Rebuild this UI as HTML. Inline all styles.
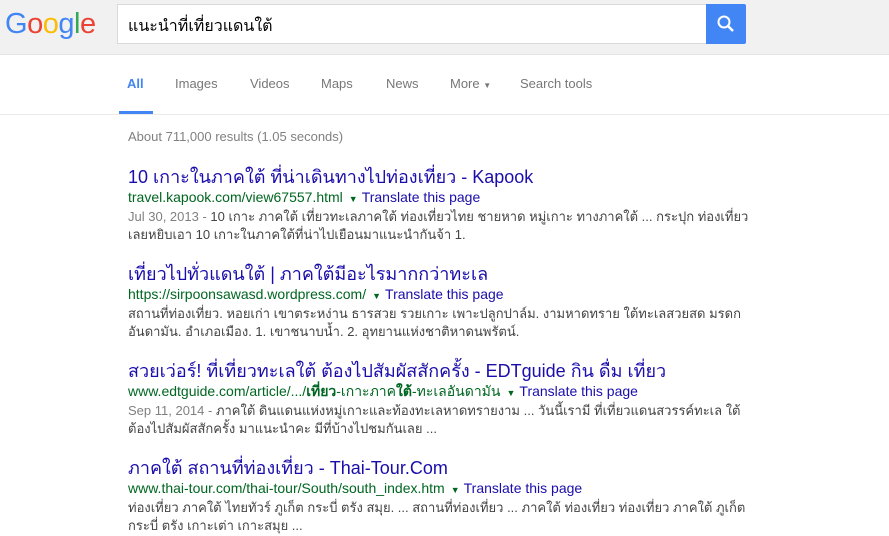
<!DOCTYPE html>
<html><head><meta charset="utf-8"><style>
*{margin:0;padding:0;box-sizing:border-box}
body{width:889px;height:536px;overflow:hidden;background:#fff;font-family:"Liberation Sans",Arial,sans-serif;position:relative}
.hdr{position:absolute;left:0;top:0;width:889px;height:55px;background:#f1f1f1;border-bottom:1px solid #e5e5e5}
.logo{position:absolute;left:5px;top:8px;font-size:29px;letter-spacing:-0.5px;font-family:"Liberation Sans",sans-serif}
.box{position:absolute;left:117px;top:4px;width:590px;height:40px;background:#fff;border:1px solid #d9d9d9;border-right:none;font-size:16px;padding:9px 10px;color:#000}
.btn{position:absolute;left:706px;top:4px;width:40px;height:40px;background:#4285f4;border-radius:0 2px 2px 0}
.tabs{position:absolute;left:0;top:55px;width:889px;height:60px;border-bottom:1px solid #ebebeb}
.tab{position:absolute;top:21px;font-size:13px;color:#777}
.ul{position:absolute;left:119px;top:56px;width:34px;height:3px;background:#4285f4}
.stats{position:absolute;left:128px;top:129px;font-size:13px;color:#808080}
.r{position:absolute;left:128px;width:760px}
.t{font-size:18px;color:#1a0dab;line-height:22px;white-space:nowrap}
.u{font-size:14px;color:#006621;line-height:18px;white-space:nowrap}
.u .a{color:#006621;font-size:9px;margin:0 4px 0 6px}
.u .tr{color:#1a0dab}
.s{font-size:13px;color:#444;line-height:18px;white-space:nowrap}
.s .d{color:#808080}
</style></head><body>
<div class="hdr">
<div class="logo"><span style="color:#4285f4">G</span><span style="color:#ea4335">o</span><span style="color:#fbbc05">o</span><span style="color:#4285f4">g</span><span style="color:#34a853">l</span><span style="color:#ea4335">e</span></div>
<div class="box">แนะนำที่เที่ยวแดนใต้</div>
<div class="btn"><svg width="40" height="40" viewBox="0 0 40 40"><circle cx="18" cy="18" r="5.5" fill="none" stroke="#fff" stroke-width="2"/><line x1="22" y1="22" x2="27" y2="27" stroke="#fff" stroke-width="2.5"/></svg></div>
</div>
<div class="tabs">
<div class="tab" style="left:127px;color:#4285f4;font-weight:bold">All</div>
<div class="tab" style="left:175px">Images</div>
<div class="tab" style="left:250px">Videos</div>
<div class="tab" style="left:321px">Maps</div>
<div class="tab" style="left:386px">News</div>
<div class="tab" style="left:450px">More <span style="font-size:8px">▼</span></div>
<div class="tab" style="left:520px">Search tools</div>
<div class="ul"></div>
</div>
<div class="stats">About 711,000 results (1.05 seconds)</div>

<div class="r" style="top:166px">
<div class="t">10 เกาะในภาคใต้ ที่น่าเดินทางไปท่องเที่ยว - Kapook</div>
<div class="u">travel.kapook.com/view67557.html<span class="a">▼</span><span class="tr">Translate this page</span></div>
<div class="s"><span class="d">Jul 30, 2013 - </span>10 เกาะ ภาคใต้ เที่ยวทะเลภาคใต้ ท่องเที่ยวไทย ชายหาด หมู่เกาะ ทางภาคใต้ ... กระปุก ท่องเที่ยว<br>เลยหยิบเอา 10 เกาะในภาคใต้ที่น่าไปเยือนมาแนะนำกันจ้า 1.</div>
</div>
<div class="r" style="top:263px">
<div class="t">เที่ยวไปทั่วแดนใต้ | ภาคใต้มีอะไรมากกว่าทะเล</div>
<div class="u">https://sirpoonsawasd.wordpress.com/<span class="a">▼</span><span class="tr">Translate this page</span></div>
<div class="s">สถานที่ท่องเที่ยว. หอยเก่า เขาตระหง่าน ธารสวย รวยเกาะ เพาะปลูกปาล์ม. งามหาดทราย ใต้ทะเลสวยสด มรดก<br>อันดามัน. อำเภอเมือง. 1. เขาชนาบน้ำ. 2. อุทยานแห่งชาติหาดนพรัตน์.</div>
</div>
<div class="r" style="top:360px">
<div class="t">สวยเว่อร์! ที่เที่ยวทะเลใต้ ต้องไปสัมผัสสักครั้ง - EDTguide กิน ดื่ม เที่ยว</div>
<div class="u">www.edtguide.com/article/.../<b>เที่ยว</b>-เกาะภาค<b>ใต้</b>-ทะเลอันดามัน<span class="a">▼</span><span class="tr">Translate this page</span></div>
<div class="s"><span class="d">Sep 11, 2014 - </span>ภาคใต้ ดินแดนแห่งหมู่เกาะและท้องทะเลหาดทรายงาม ... วันนี้เรามี ที่เที่ยวแดนสวรรค์ทะเล ใต้<br>ต้องไปสัมผัสสักครั้ง มาแนะนำคะ มีที่บ้างไปชมกันเลย ...</div>
</div>
<div class="r" style="top:457px">
<div class="t">ภาคใต้ สถานที่ท่องเที่ยว - Thai-Tour.Com</div>
<div class="u">www.thai-tour.com/thai-tour/South/south_index.htm<span class="a">▼</span><span class="tr">Translate this page</span></div>
<div class="s">ท่องเที่ยว ภาคใต้ ไทยทัวร์ ภูเก็ต กระบี่ ตรัง สมุย. ... สถานที่ท่องเที่ยว ... ภาคใต้ ท่องเที่ยว ท่องเที่ยว ภาคใต้ ภูเก็ต<br>กระบี่ ตรัง เกาะเต่า เกาะสมุย ...</div>
</div>
</body></html>
